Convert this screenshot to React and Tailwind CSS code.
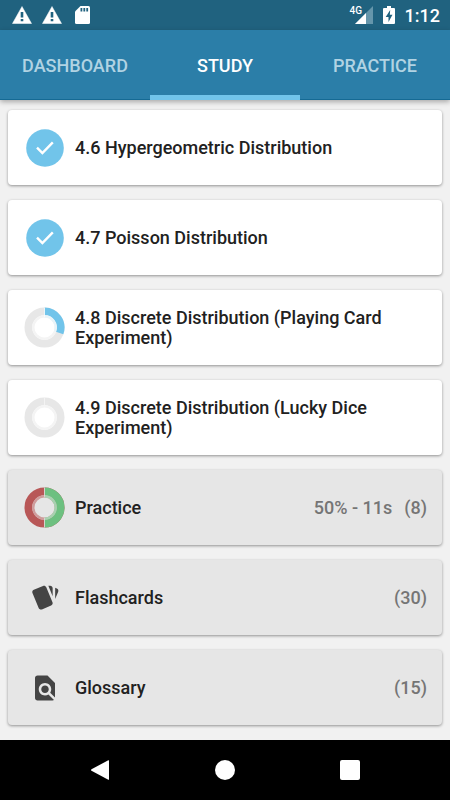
import { MdFindInPage } from "react-icons/md";

const TABS = ["DASHBOARD", "STUDY", "PRACTICE"];

const ITEMS = [
  { title: "4.6 Hypergeometric Distribution", icon: "done" },
  { title: "4.7 Poisson Distribution", icon: "done" },
  { title: "4.8 Discrete Distribution (Playing Card Experiment)", icon: "partial" },
  { title: "4.9 Discrete Distribution (Lucky Dice Experiment)", icon: "empty" },
  { title: "Practice", icon: "practice", muted: true, score: "50% - 11s", count: "(8)" },
  { title: "Flashcards", icon: "cards", muted: true, count: "(30)" },
  { title: "Glossary", icon: "glossary", muted: true, count: "(15)" },
];

function Warning() {
  return (
    <svg viewBox="0 0 20 18" className="h-[18px] w-5" aria-hidden="true">
      <path d="M10 .5 19.5 17.5H.5z" fill="#fff" stroke="#fff" strokeLinejoin="round" strokeWidth=".5" />
      <path d="M8.7 6h2.600v5.5H8.700zM8.700 13h2.600v2.2H8.700z" fill="#20627f" />
    </svg>
  );
}

function SdCard() {
  return (
    <svg viewBox="0 0 16 18" className="h-[18px] w-4" aria-hidden="true">
      <path d="M5.500 0H13.500a1.500 1.500 0 0 1 1.500 1.500v15a1.500 1.500 0 0 1-1.500 1.500H1.500A1.500 1.500 0 0 1 0 16.500V5.500z" fill="#fff" />
      <path d="M5.500 2h1.800v3.500H5.500zM8.400 2h1.800v3.500H8.400zM11.300 2h1.800v3.500h-1.800z" fill="#20627f" />
    </svg>
  );
}

function Signal() {
  return (
    <svg viewBox="0 0 18 18" className="h-[18px] w-[18px]" aria-hidden="true">
      <path d="M18 0v18H0z" fill="#6596ab" />
      <path d="M11 7v11H0z" fill="#fff" />
    </svg>
  );
}

function Battery() {
  return (
    <svg viewBox="0 0 12 18" className="h-[18px] w-3" aria-hidden="true">
      <path d="M4 0h4v2h3a1 1 0 0 1 1 1v14a1 1 0 0 1-1 1H1a1 1 0 0 1-1-1V3a1 1 0 0 1 1-1h3z" fill="#fff" />
      <path d="M7.200 4 2.700 11h2.800v5L9.500 8.800H6.800z" fill="#20627f" />
    </svg>
  );
}

function Ring({ left, right, innerLeft, innerRight, hole, wedge }) {
  return (
    <svg viewBox="0 0 42 42" className="size-[41px]" aria-hidden="true">
      <circle cx="21" cy="21" r="16.500" fill="none" stroke={left} strokeWidth="8" />
      <circle cx="21" cy="21" r="11.500" fill="none" stroke={innerLeft} strokeWidth="2.500" />
      {wedge && (
        <>
          <path d={wedge.outer} fill="none" stroke={right} strokeWidth="8" />
          <path d={wedge.inner} fill="none" stroke={innerRight} strokeWidth="2.500" />
        </>
      )}
      <path d="M21 .5v9.500" stroke={hole} strokeWidth=".8" />
      {wedge && wedge.half && <path d="M21 32v9.500" stroke={hole} strokeWidth=".8" />}
    </svg>
  );
}

function ItemIcon({ kind }) {
  switch (kind) {
    case "done":
      return (
        <svg viewBox="0 0 38 38" className="size-[38px]" aria-hidden="true">
          <circle cx="19" cy="19" r="18.800" fill="#71c4ea" />
          <path d="M11 18.700l5.400 5.400L26.800 13.400" fill="none" stroke="#fff" strokeWidth="2.400" />
        </svg>
      );
    case "partial":
      return (
        <Ring
          left="#e7e7e7"
          innerLeft="#f4f4f4"
          right="#71c4ea"
          innerRight="#e9f4f9"
          hole="#fff"
          wedge={{
            outer: "M21 4.500A16.500 16.500 0 0 1 36.500 26.600",
            inner: "M21 9.500A11.500 11.500 0 0 1 31.800 24.900",
          }}
        />
      );
    case "empty":
      return <Ring left="#e7e7e7" innerLeft="#f4f4f4" hole="#f6f6f6" />;
    case "practice":
      return (
        <Ring
          left="#b85757"
          innerLeft="#cf9c9c"
          right="#6dc080"
          innerRight="#a7d2b0"
          hole="#e6e6e6"
          wedge={{
            half: true,
            outer: "M21 4.500A16.500 16.500 0 0 1 21 37.500",
            inner: "M21 9.500A11.500 11.500 0 0 1 21 32.500",
          }}
        />
      );
    case "cards":
      return (
        <svg viewBox="0 0 24 24" className="size-[30px] rotate-180" fill="#444" aria-hidden="true">
          <path d="M2.530 19.650l1.340.560v-9.030l-2.430 5.860c-.410 1.020.080 2.190 1.090 2.610zM22.030 15.950L17.070 3.980c-.310-.750-1.040-1.210-1.810-1.230-.260 0-.530.040-.790.150L7.100 5.950c-.750.310-1.210 1.030-1.230 1.800-.010.270.040.540.150.800l4.960 11.970c.310.760 1.050 1.220 1.830 1.230.260 0 .520-.050.770-.150l7.360-3.050c1.020-.420 1.510-1.590 1.090-2.600zM5.880 19.750c0 1.100.900 2 2 2h1.450l-3.450-8.340v6.340z" />
        </svg>
      );
    default:
      return <MdFindInPage className="size-[30px] text-[#444]" aria-hidden="true" />;
  }
}

export default function App() {
  return (
    <div className="flex min-h-screen flex-col bg-[#f1f1f1] font-[Roboto,sans-serif]">
      <div className="flex h-[30px] items-center justify-between bg-[#20627f] pr-2.5 pl-3 text-white">
        <div className="flex items-center gap-2.5">
          <Warning />
          <Warning />
          <div className="pl-[3px]">
            <SdCard />
          </div>
        </div>
        <div className="flex items-center">
          <div className="relative pl-[5px]">
            <Signal />
            <span className="absolute top-0 left-0 text-[10px] leading-none font-medium">4G</span>
          </div>
          <div className="pr-2.5 pl-2.5">
            <Battery />
          </div>
          <time className="pt-0.5 text-lg leading-5 font-medium">1:12</time>
        </div>
      </div>

      <div
        role="tablist"
        className="z-10 grid h-[70px] grid-cols-3 border-b border-[#156a94] bg-[#2b7ea8] shadow-[0_2px_5px_rgba(0,0,0,0.3)]"
      >
        {TABS.map((tab) => {
          const active = tab === "STUDY";
          return (
            <button
              key={tab}
              type="button"
              role="tab"
              aria-selected={active}
              className={
                active
                  ? "-mb-px border-b-5 border-[#71c4ea] pt-[7px] text-lg font-medium text-white"
                  : "-mb-px border-b-5 border-transparent pt-[7px] text-lg font-medium text-[#b1d3e3]"
              }
            >
              {tab}
            </button>
          );
        })}
      </div>

      <main className="flex-1 px-2 pt-2.5 pb-[15px]">
        <ul className="flex flex-col gap-[15px]">
          {ITEMS.map((item) => (
            <li key={item.title}>
              <button
                type="button"
                className={
                  item.muted
                    ? "flex h-[75px] w-full items-center rounded-sm bg-[#e6e6e6] pr-[15px] pl-4 text-left text-lg leading-5 font-medium shadow-[0_1px_3px_rgba(0,0,0,0.4)]"
                    : "flex h-[75px] w-full items-center rounded-sm bg-white pr-[15px] pl-4 text-left text-lg leading-5 font-medium shadow-[0_1px_3px_rgba(0,0,0,0.4)]"
                }
              >
                <span className="flex w-[41px] shrink-0 justify-center">
                  <ItemIcon kind={item.icon} />
                </span>
                <span className="flex-1 pt-px pr-4 pl-2.5 text-[#212121]">{item.title}</span>
                {item.score && <span className="pt-px pr-3 text-[#757575]">{item.score}</span>}
                {item.count && <span className="pt-px text-[#757575]">{item.count}</span>}
              </button>
            </li>
          ))}
        </ul>
      </main>

      <nav aria-label="System" className="grid h-[60px] grid-cols-[repeat(3,125px)] justify-center bg-black">
        <button type="button" aria-label="Back" className="flex items-center justify-center">
          <svg viewBox="0 0 20 20" className="size-5" fill="#fff">
            <path d="M18.300.300Q19 0 19 .800v18.400q0 .800-.700.500L1.500 10.800q-1-.800 0-1.600z" />
          </svg>
        </button>
        <button type="button" aria-label="Home" className="flex items-center justify-center">
          <span className="size-5 rounded-full bg-white" />
        </button>
        <button type="button" aria-label="Recents" className="flex items-center justify-center">
          <span className="size-5 rounded-xs bg-white" />
        </button>
      </nav>
    </div>
  );
}
